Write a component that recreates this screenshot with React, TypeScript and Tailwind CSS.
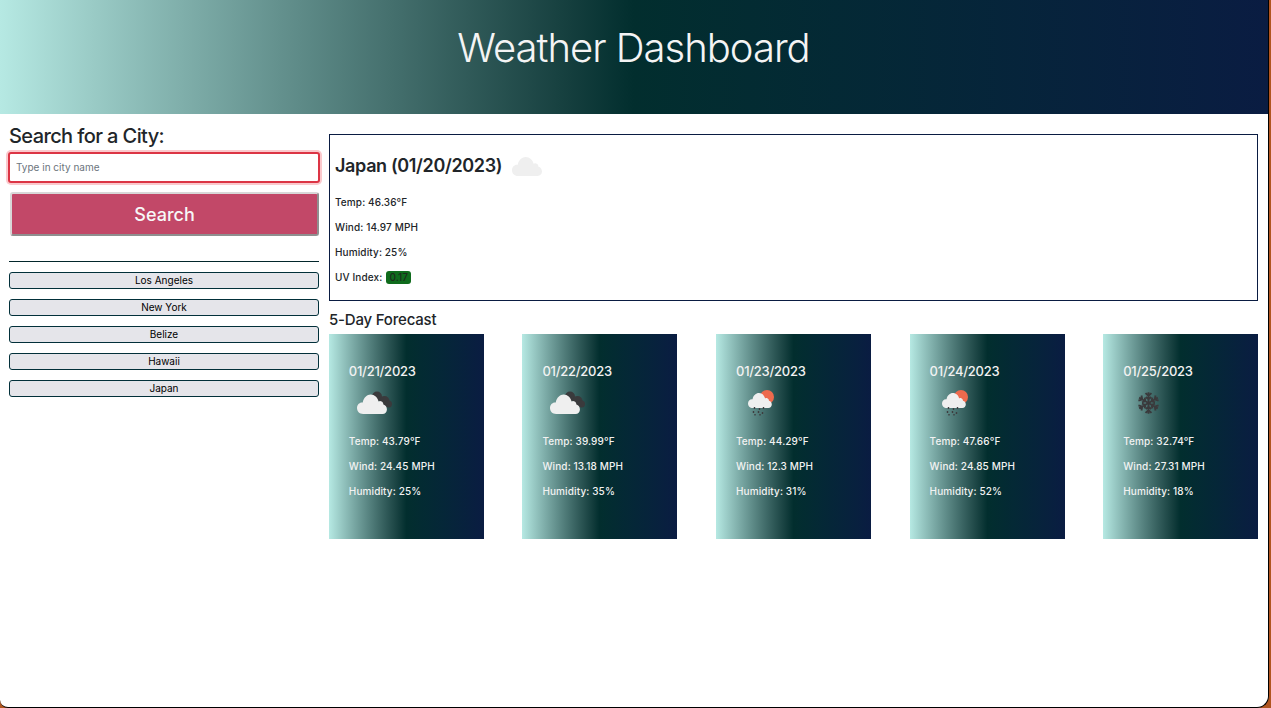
import React from 'react';

type Day = { date: string; icon: 'clouds' | 'rain' | 'snow'; temp: string; wind: string; humidity: string };

const forecast: Day[] = [
  { date: '01/21/2023', icon: 'clouds', temp: '43.79', wind: '24.45', humidity: '25' },
  { date: '01/22/2023', icon: 'clouds', temp: '39.99', wind: '13.18', humidity: '35' },
  { date: '01/23/2023', icon: 'rain', temp: '44.29', wind: '12.3', humidity: '31' },
  { date: '01/24/2023', icon: 'rain', temp: '47.66', wind: '24.85', humidity: '52' },
  { date: '01/25/2023', icon: 'snow', temp: '32.74', wind: '27.31', humidity: '18' },
];

const cities = ['Los Angeles', 'New York', 'Belize', 'Hawaii', 'Japan'];

const cloudPath = 'M7 28 C2.5 28 0 25 0 22 C0 18.5 3 16 6.5 16.5 C7.5 11.5 11.5 8.5 15.5 8.5 C20 8.5 23.5 11.5 24.5 15.5 C25.5 14.8 27 14.8 28 15.5 C29.5 16.2 30 17.5 30 18.5 C32.5 19 34 21 34 23.5 C34 26 32 28 29 28 Z';

const WeatherIcon = ({ kind }: { kind: Day['icon'] }) => {
  if (kind === 'snow') {
    const arm = 'M25 25 V7 M25 13 L20 8.5 M25 13 L30 8.5 M25 19 L20.5 15 M25 19 L29.5 15';
    return (
      <svg width="50" height="50" viewBox="0 0 50 50" className="block">
        <g transform="translate(22.5 26) scale(0.6) translate(-25 -25)" stroke="#3a3a3c" strokeWidth="3.2" fill="none">
          {[0, 60, 120, 180, 240, 300].map((a) => (
            <path key={a} d={arm} transform={`rotate(${a} 25 25)`} />
          ))}
        </g>
      </svg>
    );
  }
  if (kind === 'rain') {
    return (
      <svg width="50" height="50" viewBox="0 0 50 50" className="block">
        <circle cx="28" cy="20" r="7" fill="#ee6a4d" />
        <path transform="translate(9 9.5) scale(0.7 0.77)" d={cloudPath} fill="#efefef" />
        <g stroke="#3d3d3f" strokeWidth="1.4">
          <path d="M15.5 30 v2 M20.5 31 v2 M24.5 30 v2 M14.5 34 v2 M19.5 34 v2 M23.5 35 v2 M16 37 v1.5 M21 37 v1.5" />
        </g>
      </svg>
    );
  }
  return (
    <svg width="50" height="50" viewBox="0 0 50 50" className="block">
      <g fill="#3a3a3c">
        <circle cx="25" cy="19.5" r="5" />
        <circle cx="32.5" cy="24" r="5" />
        <circle cx="36.5" cy="27" r="3.5" />
      </g>
      <path transform="translate(5 9) scale(0.88 1)" d={cloudPath} fill="#efefef" />
    </svg>
  );
};

const ForecastCard = ({ day }: { day: Day }) => (
  <div className="w-[155px] h-[205px] pl-5 pt-[29px] text-white bg-gradient-to-r from-[#b6e9e3] via-[#022e2e] to-[#0a1c42] flex flex-col">
    <h5 className="text-[13px] leading-4 font-medium tracking-[-0.25px] text-[#f2f2f2]">{day.date}</h5>
    <div className="h-[50px] -mt-[2px] ml-[3px]">
      <WeatherIcon kind={day.icon} />
    </div>
    <div className="mt-[8px] flex flex-col gap-[13px] text-[10px] leading-3 font-medium tracking-[0.12px] text-[#f2f2f2]">
      <p>Temp: {day.temp}°F</p>
      <p>Wind: {day.wind} MPH</p>
      <p>Humidity: {day.humidity}%</p>
    </div>
  </div>
);

export default function App() {
  return (
    <div className="h-[708px] w-full overflow-hidden bg-[#b0551f] font-['Inter',sans-serif]">
      <div className="h-[708px] w-[1269px] bg-white border-r border-b border-black rounded-br-[12px] rounded-bl-[8px] overflow-hidden">
        <header className="h-[114px] flex justify-center pt-[28px] bg-gradient-to-r from-[#b6e9e3] via-[#022e2e] to-[#0a1c42]">
          <h1 className="text-[40px] leading-10 font-[350] tracking-[-1px] -ml-px text-[#f4f4f4]">Weather Dashboard</h1>
        </header>
        <div className="flex gap-[10px] pl-[9px] pr-[10px]">
          <aside className="w-[310px] shrink-0">
            <h2 className="mt-[10px] text-[20px] leading-6 font-medium tracking-[-0.6px] text-[#212529]">Search for a City:</h2>
            <input
              readOnly
              placeholder="Type in city name"
              className="mt-[4px] -ml-px block w-[312px] h-[31px] px-[6px] pb-px text-[10px] rounded-[3px] bg-white border-2 border-[#dc3545] shadow-[0_0_0_2px_#fbc9cd] outline-none placeholder:text-[#6c757d]"
            />
            <button className="mt-[9px] ml-px block w-[309px] h-[44px] rounded-[3px] bg-[#c24868] text-[#f7f7f7] text-[18px] font-medium border-2 border-t-[#d8d8d8] border-l-[#d8d8d8] border-r-[#8f8f8f] border-b-[#8f8f8f]">
              Search
            </button>
            <hr className="mt-[25px] border-t border-[#02262b]" />
            <div className="mt-[10px] flex flex-col gap-[10px]">
              {cities.map((c) => (
                <button
                  key={c}
                  className="block w-full h-[17px] pb-px rounded-[3px] bg-[#e5e5ea] border border-[#02303a] text-[10px] leading-none text-black"
                >
                  {c}
                </button>
              ))}
            </div>
          </aside>
          <main className="flex-1 pt-[20px]">
            <section className="h-[167px] border border-[#0a1c42] px-[5px] pt-[20px]">
              <div className="flex items-center h-[22px]">
                <h2 className="text-[18px] leading-[22px] font-semibold tracking-[-0.35px] text-[#212529]">Japan (01/20/2023)</h2>
                <svg width="30" height="19" viewBox="0 8.5 34 19.5" preserveAspectRatio="none" className="ml-[10px] mt-[1px]">
                  <path d={cloudPath} fill="#efefef" />
                </svg>
              </div>
              <div className="mt-[19px] flex flex-col gap-[13px] text-[10px] leading-3 font-medium tracking-[0.12px] text-[#212529]">
                <p>Temp: 46.36°F</p>
                <p>Wind: 14.97 MPH</p>
                <p>Humidity: 25%</p>
                <p className="flex items-center h-3">
                  UV Index:
                  <span className="ml-1 px-[3px] h-[13px] leading-[13px] rounded-[3px] bg-[#0f6b1c] text-[#1c2b1c]">0.17</span>
                </p>
              </div>
            </section>
            <h3 className="mt-[10px] text-[15px] leading-[18px] font-medium tracking-[-0.2px] text-[#212529]">5-Day Forecast</h3>
            <div className="mt-[5px] -mx-[0.2px] flex justify-between">
              {forecast.map((d) => (
                <ForecastCard key={d.date} day={d} />
              ))}
            </div>
          </main>
        </div>
      </div>
    </div>
  );
}
